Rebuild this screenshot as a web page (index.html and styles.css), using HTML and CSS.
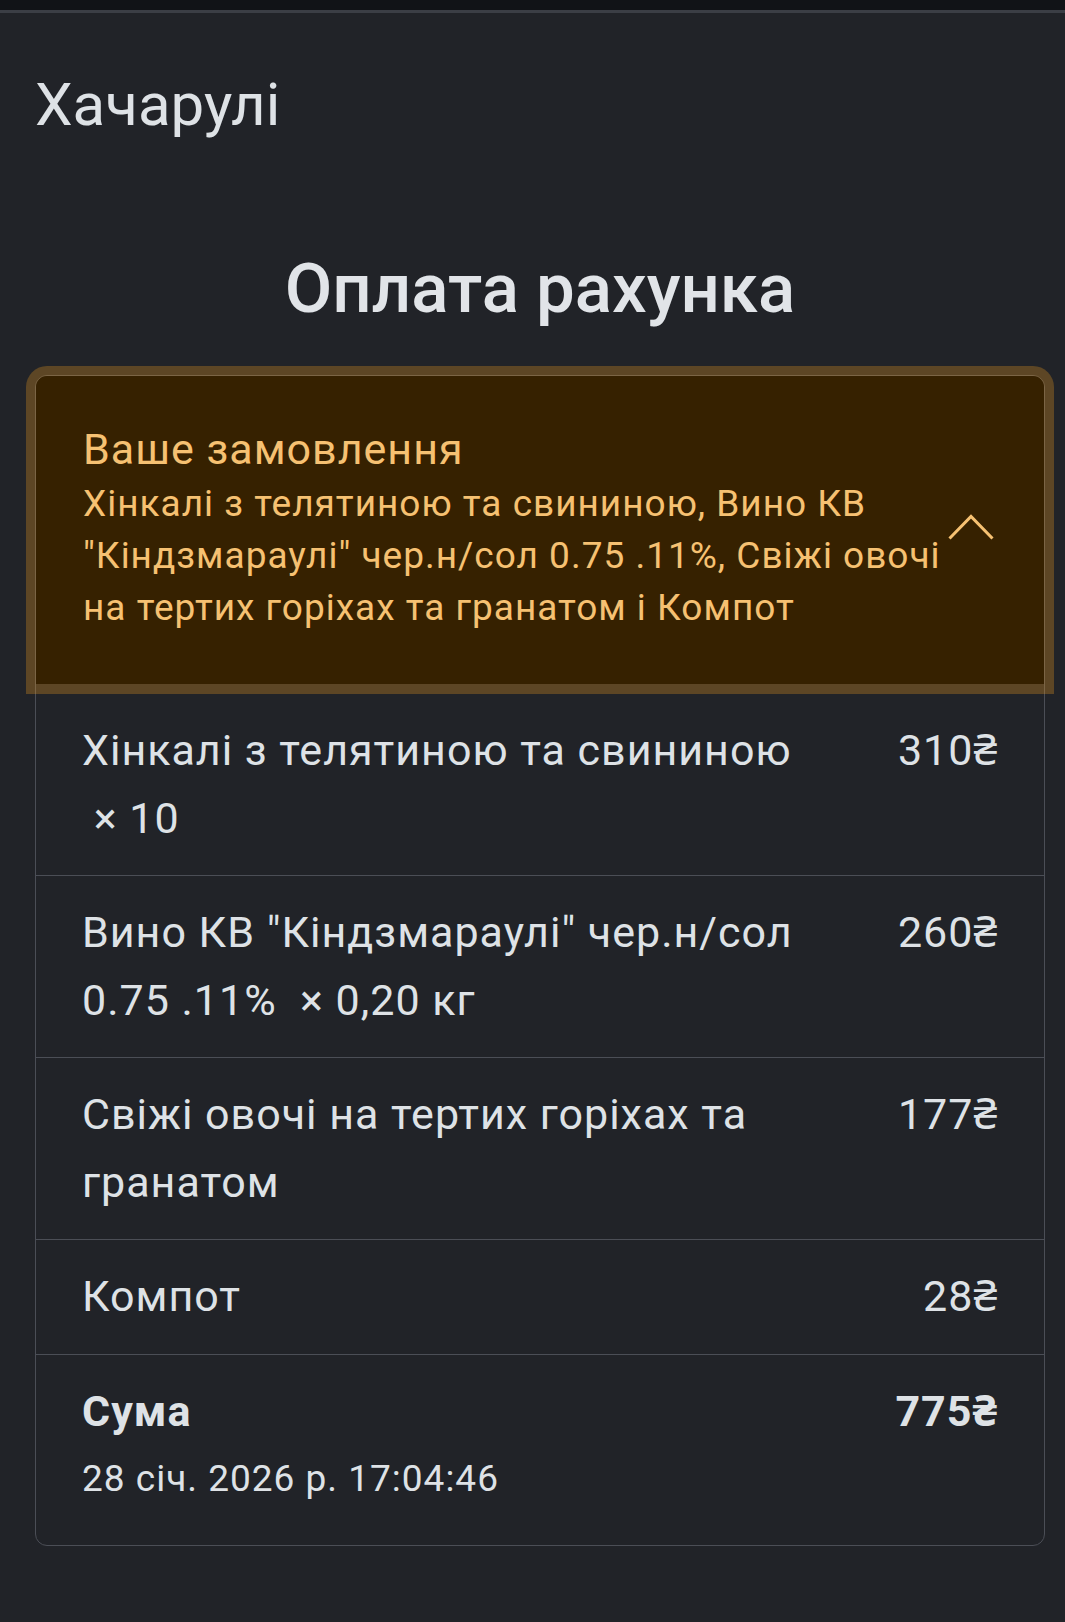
FILE: index.html
```html
<!DOCTYPE html>
<html lang="uk">
<head>
<meta charset="utf-8">
<title>Оплата рахунка</title>
<link rel="stylesheet" href="styles.css">
</head>
<body>
<div class="topbar"></div>
<div class="page">
  <div class="brand">Хачарулі</div>
  <h1 class="title">Оплата рахунка</h1>

  <div class="bill">
    <div class="order-head">
      <div class="order-text">
        <div class="order-label">Ваше замовлення</div>
        <div class="order-list">Хінкалі з телятиною та свининою, Вино КВ "Кіндзмараулі" чер.н/сол 0.75 .11%, Свіжі овочі на тертих горіхах та гранатом і Компот</div>
      </div>
      <svg class="chevron" width="46" height="26" viewBox="0 0 46 26">
        <polyline points="1.5,24.5 23,2.5 44.5,24.5" fill="none" stroke="currentColor" stroke-width="3"/>
      </svg>
    </div>

    <div class="item">
      <div class="item-name">Хінкалі з телятиною та свининою <span class="qty">&nbsp;× 10</span></div>
      <div class="item-price">310₴</div>
    </div>
    <div class="item">
      <div class="item-name">Вино КВ "Кіндзмараулі" чер.н/сол 0.75 .11% <span class="qty">&nbsp;× 0,20 кг</span></div>
      <div class="item-price">260₴</div>
    </div>
    <div class="item">
      <div class="item-name">Свіжі овочі на тертих горіхах та гранатом</div>
      <div class="item-price">177₴</div>
    </div>
    <div class="item">
      <div class="item-name">Компот</div>
      <div class="item-price">28₴</div>
    </div>
    <div class="item total">
      <div class="item-name">
        <div class="total-label">Сума</div>
        <div class="total-date">28 січ. 2026 р. 17:04:46</div>
      </div>
      <div class="item-price total-sum">775₴</div>
    </div>
  </div>
</div>
</body>
</html>
```

FILE: styles.css
```css
html, body
{
  margin: 0;
  padding: 0;
}
body
{
  background: #212328;
  color: #dee2e6;
  font-family: Roboto, "Noto Sans", sans-serif;
  font-size: 43px;
  line-height: 67.5px;
}
.topbar
{
  height: 10px;
  background: #111317;
  border-bottom: 3px solid #3b3e45;
}
.page
{
  padding: 0 20px 60px 35px;
}
.brand
{
  font-size: 60px;
  line-height: 74px;
  margin-top: 55px;
}
.title
{
  margin: 105px 0 0 0;
  font-size: 69px;
  font-weight: 500;
  line-height: 83px;
  text-align: center;
  color: #e1e4e8;
}

/* card with the order */
.bill
{
  margin-top: 45px;
  border: 1px solid #4b4e56;
  border-radius: 12px;
  letter-spacing: 1px;
}
.order-head
{
  display: flex;
  align-items: center;
  padding: 44px 50px 50px 47px;
  margin-bottom: 10px;
  background: #362100;
  color: #f6c172;
  border-radius: 11px 11px 0 0;
  box-shadow: 0 0 0 10px rgba(255, 165, 30, 0.27);
}
.order-text
{
  flex: 1;
}
.order-label
{
  font-size: 43px;
  line-height: 58px;
}
.order-list
{
  font-size: 37px;
  line-height: 52px;
}
.chevron
{
  flex: none;
  display: block;
}
.item
{
  display: flex;
  gap: 32px;
  padding: 23px 46px;
  border-top: 1px solid #4b4e56;
}
.order-head + .item
{
  border-top: none;
}
.item-name
{
  flex: 1;
}
.qty
{
  white-space: nowrap;
}
.item-price
{
  flex: none;
  text-align: right;
}
.total
{
  padding-bottom: 32px;
}
.total-label, .total-sum
{
  font-weight: bold;
}
.total-date
{
  font-size: 37px;
}
```
